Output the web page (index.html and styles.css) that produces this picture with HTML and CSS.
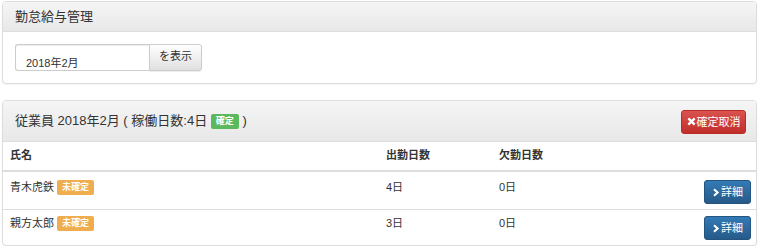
FILE: index.html
```html
<!DOCTYPE html>
<html lang="ja">
<head>
<meta charset="utf-8">
<title>勤怠給与管理</title>
<link rel="stylesheet" href="styles.css">
</head>
<body>
<div class="panel">
  <div class="panel-heading">
    <h3 class="panel-title">勤怠給与管理</h3>
  </div>
  <div class="panel-body">
    <form class="month-form">
      <input class="month-input" type="text" value="2018年2月">
      <button type="button" class="btn btn-default">を表示</button>
    </form>
  </div>
</div>

<div class="panel panel-second">
  <div class="panel-heading heading-flex">
    <h3 class="panel-title title-lg">従業員 2018年2月 ( 稼働日数:4日 <span class="label label-success">確定</span> )</h3>
    <button type="button" class="btn btn-danger"><svg class="ico-x" viewBox="0 0 10 10" width="9" height="9"><path d="M1.5 1.5 L8.5 8.5 M8.5 1.5 L1.5 8.5" stroke="#fff" stroke-width="2.6" stroke-linecap="butt"/></svg>確定取消</button>
  </div>
  <table class="table">
    <thead>
      <tr><th class="c1">氏名</th><th class="c2">出勤日数</th><th class="c3">欠勤日数</th><th class="c4"></th></tr>
    </thead>
    <tbody>
      <tr>
        <td>青木虎鉄 <span class="label label-warning">未確定</span></td>
        <td>4日</td>
        <td>0日</td>
        <td class="act"><button type="button" class="btn btn-primary"><svg class="ico-chev" viewBox="0 0 10 10" width="8" height="9"><path d="M2.5 1 L7 5 L2.5 9" fill="none" stroke="#fff" stroke-width="2.6"/></svg>詳細</button></td>
      </tr>
      <tr>
        <td>親方太郎 <span class="label label-warning">未確定</span></td>
        <td>3日</td>
        <td>0日</td>
        <td class="act"><button type="button" class="btn btn-primary"><svg class="ico-chev" viewBox="0 0 10 10" width="8" height="9"><path d="M2.5 1 L7 5 L2.5 9" fill="none" stroke="#fff" stroke-width="2.6"/></svg>詳細</button></td>
      </tr>
    </tbody>
  </table>
</div>
</body>
</html>
```
FILE: styles.css
```css
* { box-sizing: border-box; }
html, body { background: #fff; }
body {
  margin: 0;
  padding: 1px 4px 0 2px;
  font-family: "Liberation Sans", "Noto Sans CJK JP", sans-serif;
  font-size: 11px;
  color: #333;
}
.panel {
  border: 1px solid #ddd;
  border-radius: 4px;
  background: #fff;
  box-shadow: 0 1px 2px rgba(0,0,0,0.05);
  overflow: hidden;
}
.panel-second { margin-top: 16px; }
.panel-heading {
  background: linear-gradient(to bottom, #f5f5f5 0%, #e8e8e8 100%);
  border-bottom: 1px solid #ddd;
  height: 30px;
  padding: 0 12px;
  display: flex;
  align-items: center;
}
.panel-title {
  margin: 0;
  font-size: 13px;
  font-weight: normal;
  color: #333;
  line-height: 16px;
}
.heading-flex {
  height: 41px;
  justify-content: space-between;
  padding: 0 10px 0 12px;
}
.title-lg { font-size: 13px; }
.panel-body { padding: 12px 12px 12px; }
.month-form { display: flex; margin: 0; }
.month-input {
  width: 134px;
  height: 27px;
  border: 1px solid #ccc;
  border-right: none;
  border-radius: 3px 0 0 3px;
  padding: 9px 10px 0;
  font-family: inherit;
  font-size: 11px;
  color: #333;
  box-shadow: inset 0 1px 1px rgba(0,0,0,0.075);
  outline: none;
}
.btn {
  font-family: inherit;
  font-size: 11px;
  line-height: 14px;
  cursor: pointer;
  border: 1px solid transparent;
  display: inline-flex;
  align-items: center;
  justify-content: center;
}
.btn-default {
  width: 53px;
  height: 27px;
  border-color: #ccc;
  border-radius: 0 3px 3px 0;
  background: linear-gradient(to bottom, #fff 0%, #e0e0e0 100%);
  color: #333;
  padding: 0 0 3px;
  box-shadow: inset 0 1px 0 rgba(255,255,255,0.15), 0 1px 1px rgba(0,0,0,0.075);
}
.btn-danger {
  width: 65px;
  height: 24px;
  border-color: #b92c28;
  border-radius: 3px;
  background: linear-gradient(to bottom, #d9534f 0%, #c12e2a 100%);
  color: #fff;
  padding: 0;
  margin-top: 1px;
}
.btn-primary {
  width: 47px;
  height: 24px;
  border-color: #245580;
  border-radius: 3px;
  background: linear-gradient(to bottom, #337ab7 0%, #265a88 100%);
  color: #fff;
  padding: 0;
}
.ico-x { margin-right: 1px; }
.ico-chev { margin-right: 1px; }
.label {
  display: inline-block;
  font-size: 9px;
  font-weight: bold;
  line-height: 10px;
  color: #fff;
  border-radius: 2px;
  padding: 2px 5px 3px;
  vertical-align: 1px;
}
.label-success { background: #5cb85c; }
.label-warning { background: #f0ad4e; }
.table {
  width: 100%;
  border-collapse: collapse;
}
.table th {
  text-align: left;
  font-weight: bold;
  padding: 6px 7px 7px 7px;
  line-height: 15px;
  border-bottom: 2px solid #ddd;
}
.table td {
  vertical-align: top;
  padding: 8px 5px 5px 7px;
  line-height: 15px;
  border-bottom: 1px solid #ddd;
}
.table tbody tr:last-child td { border-bottom: none; padding-top: 6px; padding-bottom: 5px; }
.table td.act { text-align: right; }
.c1 { width: 376px; }
.c2 { width: 113px; }
.c3 { width: 150px; }
```
